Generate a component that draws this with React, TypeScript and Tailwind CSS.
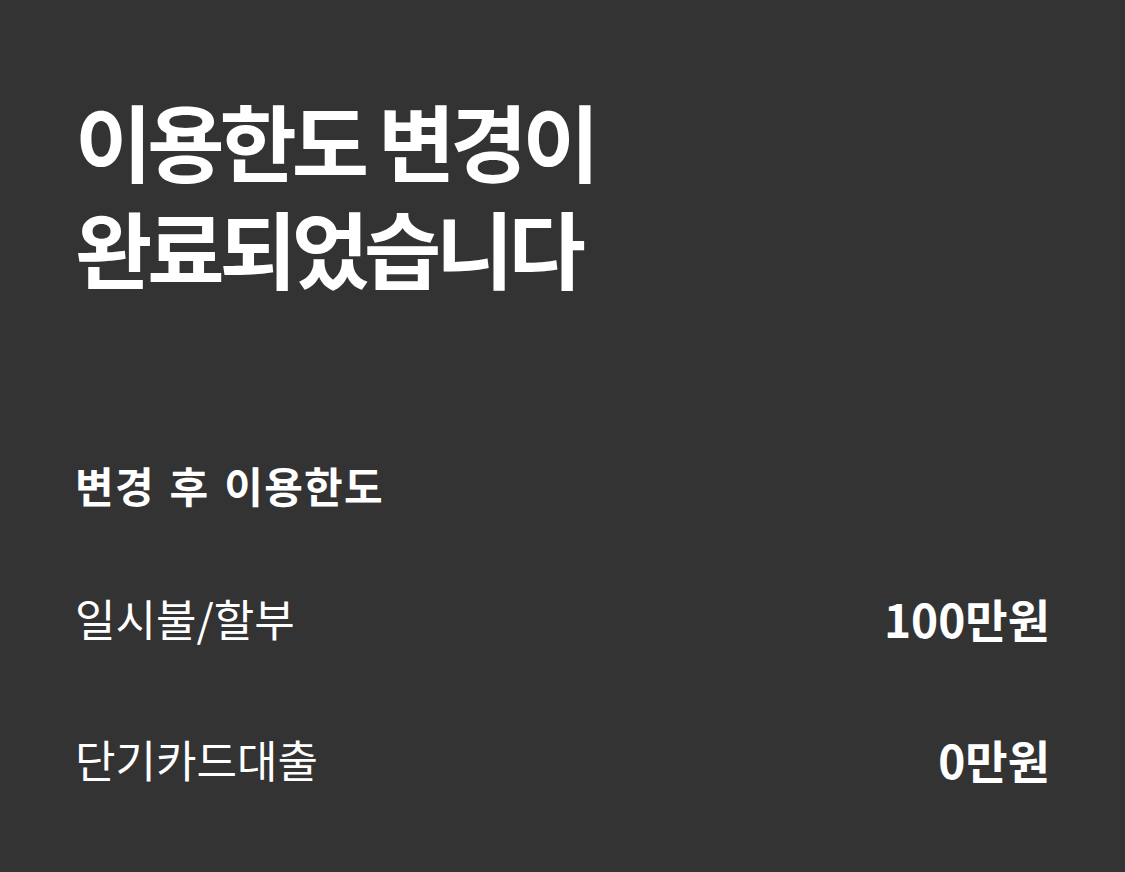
import React from 'react';

const limits = [
  { label: '일시불/할부', amount: '100만원' },
  { label: '단기카드대출', amount: '0만원' },
];

const App: React.FC = () => {
  return (
    <div
      className="min-h-screen bg-[#333333] px-[75px] pt-[86px] text-white"
      style={{ fontFamily: '"Noto Sans CJK KR", "Noto Sans", sans-serif' }}
    >
      <h1 className="flex flex-col text-[84px] font-bold tracking-[-0.06em]">
        <span className="block h-[107px] leading-[107px]">이용한도 변경이</span>
        <span className="block h-[107px] leading-[107px]">완료되었습니다</span>
      </h1>

      <h2 className="mt-[157px] text-[42px] font-bold leading-[56px] tracking-[0.03em] [word-spacing:4px]">
        변경 후 이용한도
      </h2>

      <dl className="mt-[77px] flex flex-col gap-[85px]">
        {limits.map((row) => (
          <div key={row.label} className="flex items-center justify-between">
            <dt className="text-[44px] leading-[56px]">{row.label}</dt>
            <dd className="text-[46px] font-bold leading-[56px]">{row.amount}</dd>
          </div>
        ))}
      </dl>
    </div>
  );
};

export default App;
